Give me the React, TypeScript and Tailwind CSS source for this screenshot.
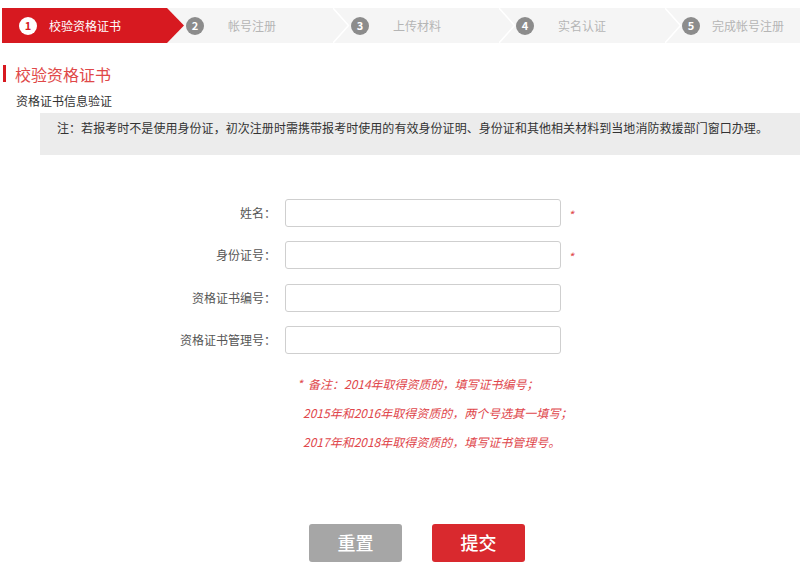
import React from "react";

const FONT = '"Noto Sans CJK SC", "Noto Sans", "Liberation Sans", sans-serif';

function Chevron() {
  return (
    <svg className="absolute left-0 top-0" width="17" height="35" viewBox="0 0 17 35">
      <polyline points="0,0 15.5,17.5 0,35" fill="none" stroke="#ffffff" strokeWidth="1.5" />
    </svg>
  );
}

function GreyStep({ n, label, w, pl, chevron }: { n: number; label: string; w: string; pl: string; chevron: boolean }) {
  return (
    <div className={`relative flex h-full items-center ${pl} ${w}`}>
      {chevron && <Chevron />}
      <div className="flex h-[18px] w-[18px] items-center justify-center rounded-full bg-[#8c8c8c] text-[11px] font-bold leading-none text-white">
        {n}
      </div>
      <div className="w-[96px] shrink-0 text-center text-[12px] leading-none text-[#b5b5b5]">{label}</div>
    </div>
  );
}

function Row({ label, required }: { label: string; required?: boolean }) {
  return (
    <div className="flex h-[28px] items-center">
      <div className="w-[276px] text-right text-[12px] leading-none text-[#555]">{label}：</div>
      <div className="ml-[9px] h-[28px] w-[276px] rounded-[3px] border border-[#cfcfcf] bg-white" />
      {required && <span className="ml-[7px] mt-[4px] text-[12px] italic leading-none text-[#e0474c]">*</span>}
    </div>
  );
}

export default function App() {
  return (
    <div className="relative h-[576px] w-[800px] overflow-hidden bg-white" style={{ fontFamily: FONT }}>
      {/* Step bar */}
      <div className="ml-[2px] mt-[8px] flex h-[35px] bg-[#f5f5f5]">
        <div className="relative z-10 flex h-full w-[165px] items-center bg-[#d71920] pl-[17px]">
          <div className="flex h-[18px] w-[18px] items-center justify-center rounded-full bg-white text-[11px] font-bold leading-none text-[#d71920]">
            1
          </div>
          <div className="w-[96px] shrink-0 text-center text-[12px] leading-none text-white">校验资格证书</div>
          <svg className="absolute left-full top-0" width="17" height="35" viewBox="0 0 17 35">
            <polygon points="0,0 17,17.5 0,35" fill="#d71920" />
          </svg>
        </div>
        <GreyStep n={2} label="帐号注册" w="w-[166px]" pl="pl-[19px]" chevron={false} />
        <GreyStep n={3} label="上传材料" w="w-[166px]" pl="pl-[18px]" chevron />
        <GreyStep n={4} label="实名认证" w="w-[166px]" pl="pl-[17px]" chevron />
        <GreyStep n={5} label="完成帐号注册" w="w-[135px]" pl="pl-[17px]" chevron />
      </div>

      {/* Title */}
      <div className="mt-[22px] flex h-[17px] items-center">
        <div className="ml-[3px] h-[17px] w-[3px] bg-[#d71920]" />
        <div className="ml-[9px] text-[16px] leading-none text-[#e04848]">校验资格证书</div>
      </div>
      <div className="ml-[16px] mt-[10px] text-[12px] leading-[17px] text-[#333]">资格证书信息验证</div>

      {/* Note */}
      <div className="ml-[40px] mt-[4px] h-[42px] bg-[#ececec] pl-[17px] pt-[6px] text-[12px] leading-[17px] tracking-[0.05px] text-[#333]">
        注：若报考时不是使用身份证，初次注册时需携带报考时使用的有效身份证明、身份证和其他相关材料到当地消防救援部门窗口办理。
      </div>

      {/* Form */}
      <div className="mt-[44px] flex flex-col gap-[14.33px]">
        <Row label="姓名" required />
        <Row label="身份证号" required />
        <Row label="资格证书编号" />
        <Row label="资格证书管理号" />
      </div>

      {/* Remarks */}
      <div className="mt-[15px] text-[12px] italic leading-[29px] text-[#e0474c]">
        <div className="ml-[297px]">*&nbsp; 备注：2014年取得资质的，填写证书编号；</div>
        <div className="ml-[303px]">2015年和2016年取得资质的，两个号选其一填写；</div>
        <div className="ml-[303px]">2017年和2018年取得资质的，填写证书管理号。</div>
      </div>

      {/* Buttons */}
      <div className="ml-[309px] mt-[68px] flex gap-[30px]">
        <button className="flex h-[38px] w-[93px] items-center justify-center rounded-[3px] bg-[#a6a6a6] text-[18px] font-medium text-white">
          重置
        </button>
        <button className="flex h-[38px] w-[93px] items-center justify-center rounded-[3px] bg-[#d9292e] text-[18px] font-medium text-white">
          提交
        </button>
      </div>
    </div>
  );
}
